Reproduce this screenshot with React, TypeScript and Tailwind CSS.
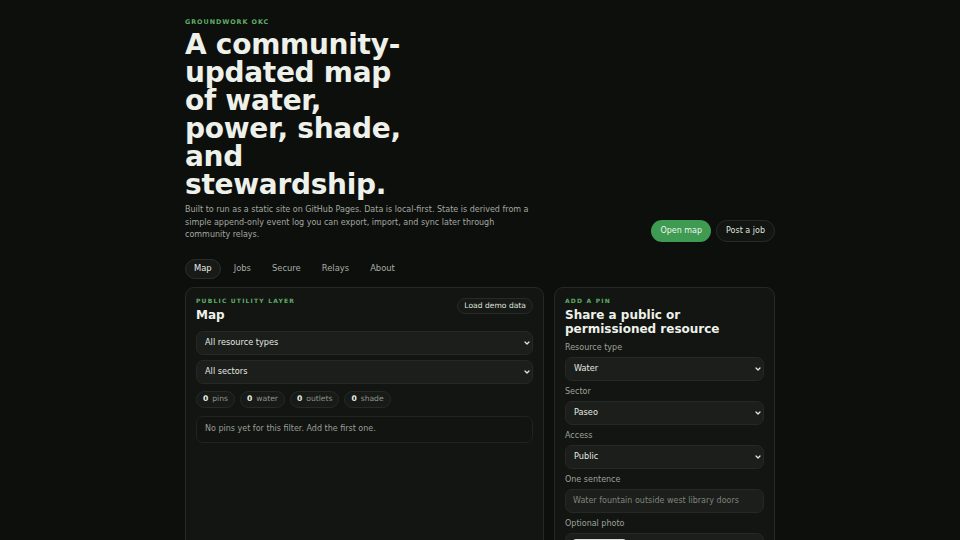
import React from "react";

const Chevron = () => (
  <svg width="6" height="4" viewBox="0 0 6 4" className="shrink-0">
    <path d="M1 1 L3 3 L5 1" fill="none" stroke="#e6e9e3" strokeWidth="1.2" strokeLinecap="round" strokeLinejoin="round" />
  </svg>
);

const Select = ({ label }: { label: string }) => (
  <div className="flex h-[24px] items-center justify-between rounded-[7px] border border-[#252925] bg-[#1b1e1b] pl-[8px] pr-[2px] text-[8.2px] text-[#e4e8e1]">
    <span>{label}</span>
    <Chevron />
  </div>
);

const Chip = ({ n, label }: { n: string; label: string }) => (
  <div className="flex h-[17px] items-center gap-[4px] rounded-full border border-[#262a25] bg-[#171a17] px-[6px] text-[7.6px]">
    <span className="font-bold text-[#eef1ea]">{n}</span>
    <span className="text-[#8f958c]">{label}</span>
  </div>
);

const Field = ({ label, children }: { label: string; children: React.ReactNode }) => (
  <div className="flex flex-col">
    <div className="mb-[4px] h-[10px] text-[8px] leading-[10px] text-[#9da39a]">{label}</div>
    {children}
  </div>
);

export default function App() {
  return (
    <div className="min-h-screen overflow-hidden bg-[#0d0f0d] font-['DejaVu_Sans',sans-serif]">
      <div className="mx-auto w-[590px] pt-[18px]">
        <header className="flex items-end justify-between">
          <div>
            <p className="text-[6.4px] font-bold leading-[8px] tracking-[0.15em] text-[#5fae67]">GROUNDWORK OKC</p>
            <h1 className="mt-[5px] max-w-[232px] text-[28px] font-bold leading-[28px] tracking-[-0.01em] text-[#eef1ea]">
              A community-updated map of water, power, shade, and stewardship.
            </h1>
            <p className="mt-[5px] max-w-[352px] text-[8px] leading-[12.5px] text-[#a3a89f]">
              Built to run as a static site on GitHub Pages. Data is local-first. State is derived from a simple append-only event log you can export, import, and sync later through community relays.
            </p>
          </div>
          <div className="flex gap-[5px]">
            <button className="h-[22px] rounded-full bg-[#3f9a52] px-[9px] text-[8px] text-[#eef6ee]">Open map</button>
            <button className="h-[22px] rounded-full border border-[#272b26] bg-[#121512] px-[9px] text-[8px] text-[#dfe3dc]">Post a job</button>
          </div>
        </header>

        <nav className="mt-[17px] flex gap-[5px] text-[8.4px]">
          <div className="flex h-[20px] items-center rounded-full border border-[#2a2e29] bg-[#171a17] px-[8px] text-[#e8ebe5]">Map</div>
          {["Jobs", "Secure", "Relays", "About"].map((t) => (
            <div key={t} className="flex h-[20px] items-center px-[8px] text-[#a7aca3]">
              {t}
            </div>
          ))}
        </nav>

        <div className="mt-[8px] grid grid-cols-[359px_221px] gap-[10px]">
          <section className="rounded-[9px] border border-[#252924] bg-[#121512] px-[10px] pb-[120px] pt-[9px]">
            <div className="flex items-start justify-between">
              <div>
                <p className="text-[6px] font-bold leading-[8px] tracking-[0.2em] text-[#5fae67]">PUBLIC UTILITY LAYER</p>
                <h2 className="mt-[3px] text-[12px] font-bold leading-[14px] text-[#eef1ea]">Map</h2>
              </div>
              <button className="mt-[1px] h-[16px] rounded-full border border-[#272b26] bg-[#161916] px-[6px] text-[7.6px] text-[#dfe3dc]">Load demo data</button>
            </div>
            <div className="mt-[9px] flex flex-col gap-[5px]">
              <Select label="All resource types" />
              <Select label="All sectors" />
            </div>
            <div className="mt-[7px] flex gap-[5px]">
              <Chip n="0" label="pins" />
              <Chip n="0" label="water" />
              <Chip n="0" label="outlets" />
              <Chip n="0" label="shade" />
            </div>
            <div className="mt-[8px] flex h-[27px] items-center rounded-[7px] border border-[#20241f] bg-[#111411] px-[8px] text-[8px] text-[#9a9f97]">
              No pins yet for this filter. Add the first one.
            </div>
          </section>

          <section className="rounded-[9px] border border-[#252924] bg-[#121512] px-[10px] pb-[12px] pt-[9px]">
            <p className="text-[6px] font-bold leading-[8px] tracking-[0.2em] text-[#5fae67]">ADD A PIN</p>
            <h2 className="mt-[3px] text-[12px] font-bold leading-[14px] text-[#eef1ea]">
              Share a public or permissioned resource
            </h2>
            <div className="mt-[7px] flex flex-col gap-[6px]">
              <Field label="Resource type">
                <Select label="Water" />
              </Field>
              <Field label="Sector">
                <Select label="Paseo" />
              </Field>
              <Field label="Access">
                <Select label="Public" />
              </Field>
              <Field label="One sentence">
                <div className="flex h-[24px] items-center rounded-[7px] border border-[#252925] bg-[#1b1e1b] px-[7px] text-[8px] text-[#7f857c]">
                  Water fountain outside west library doors
                </div>
              </Field>
              <Field label="Optional photo">
                <div className="flex h-[30px] items-center gap-[5px] rounded-[7px] border border-[#252925] bg-[#1b1e1b] px-[7px] text-[7.6px] text-[#9da39a]">
                  <span className="rounded-[3px] bg-[#dcdcdc] px-[5px] py-[3px] text-[#111]">Choose File</span>
                  <span>No file chosen</span>
                </div>
              </Field>
              <Field label="Contact (optional)">
                <div className="h-[24px] rounded-[7px] border border-[#252925] bg-[#1b1e1b]" />
              </Field>
            </div>
          </section>
        </div>
      </div>
    </div>
  );
}
